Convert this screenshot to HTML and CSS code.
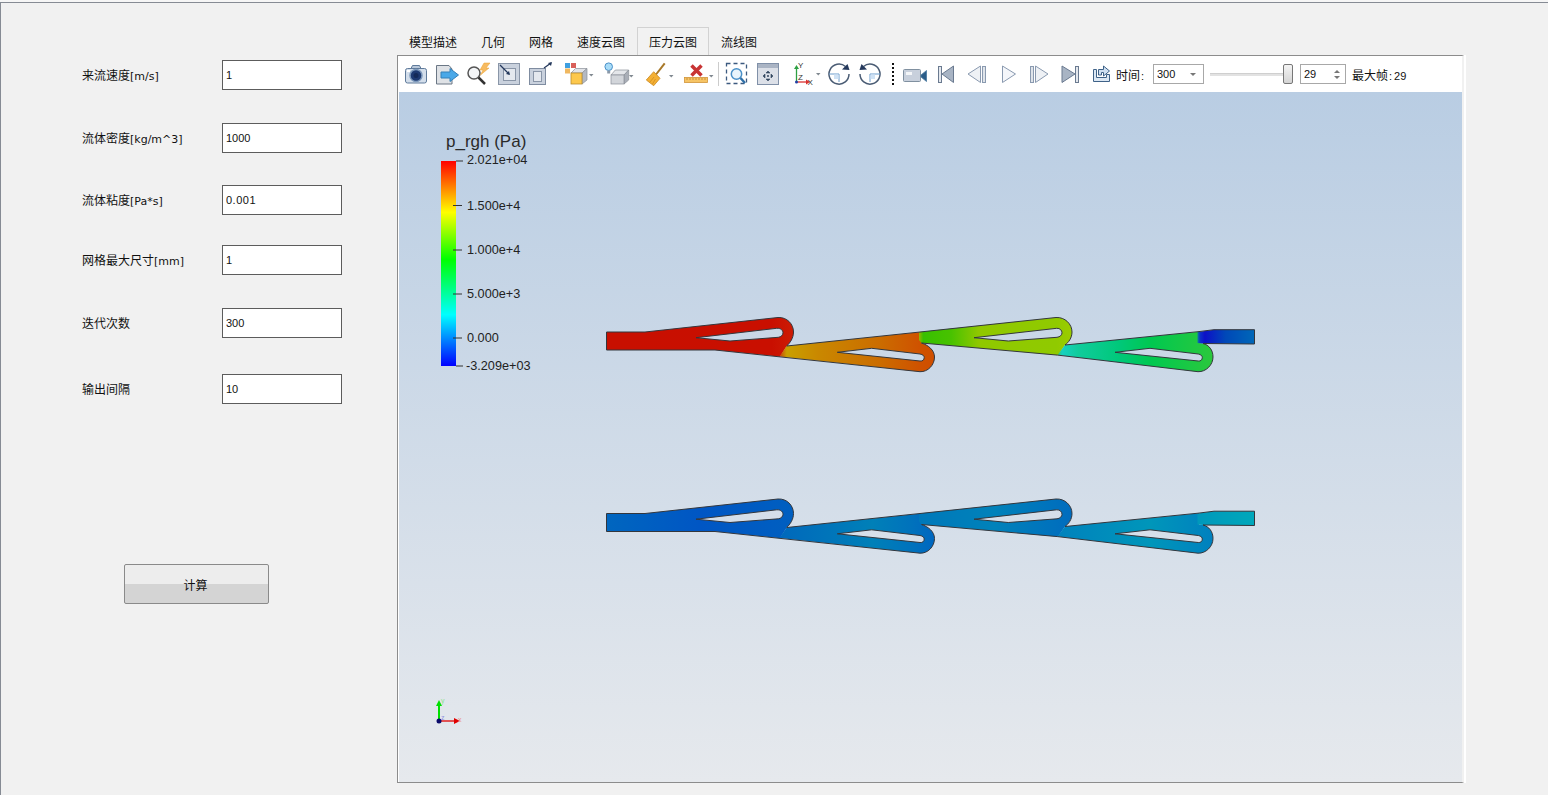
FILE: index.html
```html
<!DOCTYPE html>
<html lang="zh">
<head>
<meta charset="utf-8">
<title>压力云图</title>
<link rel="stylesheet" href="styles.css">
</head>
<body>
<div class="window">
  <aside class="form">
    <div class="row"><label>来流速度<span class="unit">[m/s]</span></label><input class="field" value="1"></div>
    <div class="row"><label>流体密度<span class="unit">[kg/m^3]</span></label><input class="field" value="1000"></div>
    <div class="row"><label>流体粘度<span class="unit">[Pa*s]</span></label><input class="field spaced" value="0.001"></div>
    <div class="row"><label>网格最大尺寸<span class="unit">[mm]</span></label><input class="field" value="1"></div>
    <div class="row"><label>迭代次数</label><input class="field" value="300"></div>
    <div class="row"><label>输出间隔</label><input class="field" value="10"></div>
    <button class="calc">计算</button>
  </aside>
  <main class="main">
    <nav class="tabs">
      <span class="tab">模型描述</span>
      <span class="tab">几何</span>
      <span class="tab">网格</span>
      <span class="tab">速度云图</span>
      <span class="tab active">压力云图</span>
      <span class="tab">流线图</span>
    </nav>
    <section class="pane">
      <div class="toolbar">
        <svg width="30" height="36" viewBox="401 56 30 36"><path d="M411 68.5l1.5-3h7l1.5 3z" fill="#b9c8da" stroke="#5f7a9a"/><rect x="405.5" y="68.5" width="21" height="14.5" rx="2" fill="#d3deeb" stroke="#5f7a9a"/><circle cx="416" cy="75.5" r="6" fill="#1e3a72" stroke="#7c98bb" stroke-width="1.5"/><circle cx="416" cy="75.5" r="2.5" fill="#142a58"/><rect x="407" y="70" width="3" height="2" fill="#fff"/></svg>
        <svg width="32" height="36" viewBox="431 56 32 36"><path d="M436.5 65.5H449l3 3.5v15h-15.500z" fill="#dfe2e6" stroke="#6b7785"/><path d="M441 72h9v-3.500l8.500 6.500-8.500 6.500V78h-9z" fill="#4aa8e8" stroke="#3580b8"/></svg>
        <svg width="29" height="36" viewBox="463 56 29 36"><circle cx="474" cy="73" r="6" fill="#f4f6f8" stroke="#555" stroke-width="1.500"/><path d="M478.500 77.500l6.500 6.500" stroke="#333" stroke-width="2.500"/><path d="M484 63h6l-4 5h3l-8.500 7 2.500-5h-3z" fill="#f7bb60" stroke="#e8a030" stroke-width=".5"/></svg>
        <svg width="34" height="36" viewBox="492 56 34 36"><rect x="498.500" y="63.500" width="21" height="21" fill="#c9d1dd" stroke="#8a96a8"/><rect x="503.500" y="68.500" width="12" height="12" fill="#e4e8ee" stroke="#8a96a8"/><path d="M500 65l9 9" stroke="#24385c" stroke-width="1.300"/><path d="M510 75l-4-1 3-3z" fill="#24385c"/></svg>
        <svg width="30" height="36" viewBox="526 56 30 36"><rect x="529.500" y="68.500" width="16" height="16" fill="#c9d1dd" stroke="#7f8ca0"/><rect x="533.500" y="71.500" width="8" height="10" fill="#e4e8ee" stroke="#8a96a8"/><path d="M544 68l7-5" stroke="#24385c" stroke-width="1.300"/><path d="M552 62l-1 4-3-3z" fill="#24385c"/></svg>
        <svg width="46" height="36" viewBox="556 56 46 36"><rect x="565" y="63" width="5" height="5" fill="#3f9fe0"/><rect x="571" y="63" width="5" height="5" fill="#d9605a"/><rect x="565" y="68.500" width="5" height="5" fill="#f0b860"/><path d="M571 73l4.500-4.500H587L582 73z" fill="#e2e4e8" stroke="#8a8f98" stroke-width=".7"/><path d="M582 73l5-4.500V80l-5 4z" fill="#b4b9c2" stroke="#8a8f98" stroke-width=".7"/><rect x="571" y="73" width="11" height="11" fill="#fdc84c" stroke="#b88c30" stroke-width=".8"/><path d="M589 74h4.500l-2.250 2.500z" fill="#808890"/></svg>
        <svg width="40" height="36" viewBox="602 56 40 36"><circle cx="608.700" cy="66.700" r="3.800" fill="#a8dcf8" stroke="#4a90c8"/><rect x="607.200" y="70.500" width="3" height="3" fill="#8a98a8"/><path d="M611 75l4.300-5h13.400L624 75z" fill="#e4e6ea" stroke="#8a8f98" stroke-width=".7"/><path d="M624 75l4.700-5v10l-4.700 4z" fill="#a9aeb7" stroke="#8a8f98" stroke-width=".7"/><rect x="611" y="75" width="13" height="9" fill="#d2d5da" stroke="#8a8f98" stroke-width=".7"/><path d="M629 75h4.500l-2.250 2.500z" fill="#808890"/></svg>
        <svg width="39" height="36" viewBox="642 56 39 36"><path d="M664.700 63.300L656 74.500" stroke="#a87828" stroke-width="2"/><path d="M653.700 71.700L660 78.300 653.700 85.700 646.300 80z" fill="#f4b034" stroke="#c98820" stroke-width=".8"/><path d="M650 82l4-5M652.500 84l3-5" stroke="#c98820" stroke-width=".7"/><path d="M669 75h4.500l-2.250 2.500z" fill="#808890"/></svg>
        <svg width="35" height="36" viewBox="681 56 35 36"><rect x="684.500" y="77.500" width="23" height="5" fill="#f6c465" stroke="#d29438" stroke-width=".8"/><path d="M687 78v2M690 78v2M693 78v2M696 78v2M699 78v2M702 78v2M705 78v2" stroke="#b87c28" stroke-width=".7"/><path d="M691.500 65.500l10 10M701.500 65.500l-10 10" stroke="#c83434" stroke-width="3.500"/><path d="M709 75h4.500l-2.250 2.500z" fill="#808890"/></svg>
        <span class="sep"></span>
        <svg width="31" height="36" viewBox="721 56 31 36"><rect x="726.500" y="63.500" width="20" height="20" fill="none" stroke="#3c5a80" stroke-width="1.300" stroke-dasharray="4 3"/><circle cx="736.500" cy="74" r="5.200" fill="#e8f4fc" stroke="#4a90c8" stroke-width="1.500"/><path d="M740.500 78l4.500 5" stroke="#3070a8" stroke-width="2.500"/></svg>
        <svg width="32" height="36" viewBox="752 56 32 36"><rect x="757.500" y="63.500" width="21" height="21" fill="#dce0e8" stroke="#8090a8"/><rect x="758" y="64" width="20" height="4" fill="#aab4c4"/><path d="M768 71l-2 2h4zM768 81l-2-2h4zM763 76l2-2v4zM773 76l-2-2v4z" fill="#33465f" stroke="#33465f" stroke-width=".6"/><circle cx="768" cy="76" r="1" fill="#33465f"/></svg>
        <svg class="axes" width="40" height="36" viewBox="784 56 40 36"><path d="M796.500 82V68" stroke="#2ea043" stroke-width="1.300"/><path d="M796.500 65l-2.500 4h5z" fill="#2ea043"/><path d="M796.500 82H807" stroke="#d83030" stroke-width="1.300"/><path d="M810 82l-4-2.500v5z" fill="#d83030"/><circle cx="796.500" cy="82" r="1.500" fill="#2040a8"/><text x="798" y="68">Y</text><text x="798" y="80">Z</text><text x="807.500" y="85">X</text><path d="M816 73h4.500l-2.250 2.500z" fill="#808890"/></svg>
        <svg width="30" height="36" viewBox="824 56 30 36"><path d="M845.500 66.500A10 10 0 1 0 849 74" fill="none" stroke="#4a5c74" stroke-width="1.500"/><path d="M849.500 70l-7.500-.5 5.500-5.500z" fill="#24385c"/><path d="M829 74h10v8" fill="none" stroke="#6a9ccc"/><rect x="834" y="74.500" width="4.500" height="4.500" fill="#cfe2f5"/></svg>
        <svg width="31" height="36" viewBox="854 56 31 36"><path d="M863.500 66.500A10 10 0 1 1 860 74" fill="none" stroke="#4a5c74" stroke-width="1.500"/><path d="M859.500 70l7.500-.5-5.500-5.500z" fill="#24385c"/><path d="M880 74h-10v8" fill="none" stroke="#6a9ccc"/><rect x="870.500" y="74.500" width="4.500" height="4.500" fill="#cfe2f5"/></svg>
        <svg width="16" height="36" viewBox="885 56 16 36"><path d="M893 63v22" stroke="#111" stroke-width="2" stroke-dasharray="2 2"/></svg>
        <svg width="29" height="36" viewBox="901 56 29 36"><rect x="903.500" y="69.500" width="17" height="12" rx="1" fill="#c8d0dc" stroke="#8090a0"/><rect x="906" y="72" width="6" height="3" fill="#f4f6f8"/><path d="M921 75l5.500-4.500v11L921 77z" fill="#2a5c88" stroke="#4a7aa0" stroke-width=".8"/></svg>
        <svg width="31" height="36" viewBox="930 56 31 36"><rect x="938.500" y="66.500" width="3" height="16" fill="#e4e8ee" stroke="#6a7a90"/><path d="M953.500 66v16.500L942 74z" fill="#a8b4c4" stroke="#6a7a90"/></svg>
        <svg width="31" height="36" viewBox="961 56 31 36"><path d="M980.500 66v16.500L968 74z" fill="#eef1f5" stroke="#8a9ab0"/><rect x="982.500" y="66.500" width="3" height="16" fill="#dfe4ea" stroke="#8a9ab0"/></svg>
        <svg width="32" height="36" viewBox="992 56 32 36"><path d="M1002.500 66v16.500L1015.500 74z" fill="#f4f6fa" stroke="#8a9ab0"/></svg>
        <svg width="31" height="36" viewBox="1024 56 31 36"><rect x="1030.500" y="66.500" width="3" height="16" fill="#dfe4ea" stroke="#8a9ab0"/><path d="M1035.500 66v16.500L1048 74z" fill="#eef1f5" stroke="#8a9ab0"/></svg>
        <svg width="31" height="36" viewBox="1055 56 31 36"><path d="M1062 66v16.500L1075 74z" fill="#a8b4c4" stroke="#6a7a90"/><rect x="1075.500" y="66.500" width="3" height="16" fill="#e4e8ee" stroke="#6a7a90"/></svg>
        <svg width="30" height="36" viewBox="1086 56 30 36"><path d="M1093.500 69.500h3v8h10v-3h3v7h-16z" fill="#dce8f4" stroke="#3f6288"/><path d="M1098.500 75v-5.500h5V66l6 5-6 5v-3.500h-2V75z" fill="#cfe0f2" stroke="#3f6288"/></svg>
        <span class="time">时间<span class="colon">:</span></span>
        <div class="combo"><span class="num">300</span><i class="caret"></i></div>
        <div class="slider"><span class="groove"></span><span class="handle"></span></div>
        <div class="spin"><span class="num">29</span><span class="arrows"><i class="up"></i><i class="down"></i></span></div>
        <span class="maxf">最大帧<span class="colon">:</span><span class="num">29</span></span>
      </div>
      <div class="view">
        <svg class="scene" width="1063" height="690" viewBox="399 92 1063 690">
          <defs>
            <linearGradient id="bar" x1="0" y1="0" x2="0" y2="1">
              <stop offset="0" stop-color="#ff0000"/><stop offset=".25" stop-color="#ffff00"/><stop offset=".48" stop-color="#00ff00"/><stop offset=".75" stop-color="#00ffff"/><stop offset="1" stop-color="#0000ff"/>
            </linearGradient>
            <linearGradient id="a1" gradientUnits="userSpaceOnUse" x1="606" y1="0" x2="790" y2="0"><stop offset="0" stop-color="#c80f00"/><stop offset=".9" stop-color="#c90f00"/><stop offset="1" stop-color="#cc1a04"/></linearGradient>
            <linearGradient id="a2" gradientUnits="userSpaceOnUse" x1="779" y1="0" x2="935" y2="0"><stop offset="0" stop-color="#c83c08"/><stop offset=".05" stop-color="#c9a000"/><stop offset=".25" stop-color="#c98800"/><stop offset=".65" stop-color="#cb6c00"/><stop offset=".9" stop-color="#cf5200"/><stop offset="1" stop-color="#cf4e00"/></linearGradient>
            <linearGradient id="a3" gradientUnits="userSpaceOnUse" x1="917" y1="0" x2="1072" y2="0"><stop offset="0" stop-color="#c8b000"/><stop offset=".04" stop-color="#38c000"/><stop offset=".22" stop-color="#48c200"/><stop offset=".4" stop-color="#90c800"/><stop offset=".9" stop-color="#90ca00"/><stop offset="1" stop-color="#9ccc00"/></linearGradient>
            <linearGradient id="a4" gradientUnits="userSpaceOnUse" x1="1056" y1="0" x2="1214" y2="0"><stop offset="0" stop-color="#40c840"/><stop offset=".04" stop-color="#18d0c0"/><stop offset=".14" stop-color="#10cc9c"/><stop offset=".4" stop-color="#00c87a"/><stop offset=".6" stop-color="#00c850"/><stop offset="1" stop-color="#2cc83c"/></linearGradient>
            <linearGradient id="a5" gradientUnits="userSpaceOnUse" x1="1196" y1="0" x2="1255" y2="0"><stop offset="0" stop-color="#10a888"/><stop offset=".07" stop-color="#0c30c8"/><stop offset=".15" stop-color="#0c10c8"/><stop offset=".5" stop-color="#0048b8"/><stop offset="1" stop-color="#0068b8"/></linearGradient>
            <linearGradient id="b1" gradientUnits="userSpaceOnUse" x1="606" y1="0" x2="794" y2="0"><stop offset="0" stop-color="#0066bf"/><stop offset=".5" stop-color="#0056c4"/><stop offset="1" stop-color="#005fc0"/></linearGradient>
            <linearGradient id="b2" gradientUnits="userSpaceOnUse" x1="779" y1="0" x2="935" y2="0"><stop offset="0" stop-color="#0068bc"/><stop offset=".6" stop-color="#0080b8"/><stop offset=".85" stop-color="#0072bc"/><stop offset="1" stop-color="#0066c0"/></linearGradient>
            <linearGradient id="b3" gradientUnits="userSpaceOnUse" x1="917" y1="0" x2="1072" y2="0"><stop offset="0" stop-color="#0078ba"/><stop offset=".5" stop-color="#0082ba"/><stop offset="1" stop-color="#006cbe"/></linearGradient>
            <linearGradient id="b4" gradientUnits="userSpaceOnUse" x1="1056" y1="0" x2="1214" y2="0"><stop offset="0" stop-color="#0082bd"/><stop offset=".6" stop-color="#0096ba"/><stop offset="1" stop-color="#0080bf"/></linearGradient>
            <linearGradient id="b5" gradientUnits="userSpaceOnUse" x1="1197" y1="0" x2="1255" y2="0"><stop offset="0" stop-color="#0098bb"/><stop offset="1" stop-color="#00a8bb"/></linearGradient>
            <path id="u1" fill-rule="evenodd" d="M606.500 332L645 332 778 317.500C787 317 793.500 324 793.500 332 793.500 338 790 343 786.700 346L780 356.700 715 350 606.500 350Z M696 337.700L776.700 328.300C781 328 783 330.500 783 332.800 783 335 781 337 778.300 337.300L730 341Z"/>
            <path id="u2" fill-rule="evenodd" d="M786.700 346L921 332 921.500 343C928 345 934.500 350 934.500 357 934.500 365 928 372 920 371.700L779.500 356.600Z M837.300 352.300L871.700 348.300 920 354C923 354.500 924.200 356 924.200 357.500 924.200 360 922.500 361.300 920 361Z"/>
            <path id="u3" fill-rule="evenodd" d="M919 332L1056 317.500C1065 317 1072 324 1072 332 1072 338 1068.500 342.500 1065 345L1058 355.200 921.500 343 919 340Z M974 337.700L1056.700 328.300C1060 328 1062 330.500 1062 332.800 1062 335 1060 337 1057 337.300L1008.300 341Z"/>
            <path id="u4" fill-rule="evenodd" d="M1065 345L1199 331.700 1199 343 1203 343.500C1209 345 1213 350 1213 357 1213 365 1206 372 1198 371.700L1057.500 355.100Z M1115 352.300L1150 348.300 1198.300 354C1201 354.500 1202.300 356 1202.300 357.500 1202.300 360 1200.500 361.300 1198.300 361Z"/>
            <path id="u5" d="M1197.500 331.900L1214 329.700 1254.500 329.700 1254.500 344 1203 343.500 1197.500 343Z"/>
            <path id="edge" fill="none" stroke="#33363c" stroke-width="1" d="M606.500 332L645 332 778 317.500C787 317 793.500 324 793.500 332 793.500 338 790 343 786.700 346L920 332 1056 317.500C1065 317 1072 324 1072 332 1072 338 1068.500 342.500 1065 345L1198 331.700 1214 329.700 1254.500 329.700 1254.500 344 1203 343.500C1209 345 1213 350 1213 357 1213 365 1206 372 1198 371.700L1057.500 355.100 921.500 343C928 345 934.500 350 934.500 357 934.500 365 928 372 920 371.700L715 350 606.500 350Z M696 337.700L776.700 328.300C781 328 783 330.500 783 332.800 783 335 781 337 778.300 337.300L730 341Z M837.300 352.300L871.700 348.300 920 354C923 354.500 924.200 356 924.200 357.500 924.200 360 922.500 361.300 920 361Z M974 337.700L1056.700 328.300C1060 328 1062 330.500 1062 332.800 1062 335 1060 337 1057 337.300L1008.300 341Z M1115 352.300L1150 348.300 1198.300 354C1201 354.500 1202.300 356 1202.300 357.500 1202.300 360 1200.500 361.300 1198.300 361Z"/>
          </defs>

          <text class="legend-title" x="446" y="147">p_rgh (Pa)</text>
          <rect x="441" y="161" width="15" height="205" fill="url(#bar)"/>
          <path class="ticks" d="M456 161h7M453 205.500h9M453 250h9M453 294h9M453 338h9M456 366h7"/>
          <text class="legend" x="467" y="164">2.021e+04</text>
          <text class="legend" x="467" y="210">1.500e+4</text>
          <text class="legend" x="467" y="254">1.000e+4</text>
          <text class="legend" x="467" y="298">5.000e+3</text>
          <text class="legend" x="467" y="342">0.000</text>
          <text class="legend" x="466" y="370">-3.209e+03</text>

          <use href="#u1" fill="url(#a1)"/><use href="#u2" fill="url(#a2)"/><use href="#u3" fill="url(#a3)"/><use href="#u4" fill="url(#a4)"/><use href="#u5" fill="url(#a5)"/>
          <use href="#edge"/>
          <g transform="translate(0 181.500)">
            <use href="#u1" fill="url(#b1)"/><use href="#u2" fill="url(#b2)"/><use href="#u3" fill="url(#b3)"/><use href="#u4" fill="url(#b4)"/><use href="#u5" fill="url(#b5)"/>
            <use href="#edge"/>
          </g>

          <path d="M439 721V705" stroke="#00e000" stroke-width="2"/><path d="M439 700l-3 6h6z" fill="#00e000"/>
          <path d="M439 721H455" stroke="#e02020" stroke-width="1.500"/><path d="M460 721l-6-3v6z" fill="#e00000"/>
          <circle cx="439" cy="721" r="2.500" fill="#0a0a6a"/>
          <text class="tiny ty" x="441" y="703">y</text><text class="tiny tx" x="458" y="722">x</text><text class="tiny tz" x="441" y="720">z</text>
        </svg>
      </div>
    </section>
  </main>
</div>
</body>
</html>
```
FILE: styles.css
```css
* { box-sizing: border-box; }
html, body { margin: 0; height: 795px; overflow: hidden; }
body {
  background: #f6f6f6;
  font: 12px "Noto Sans CJK SC", sans-serif;
  color: #111;
}
.window {
  margin-top: 2px;
  height: 793px;
  display: flex;
  background: #f1f1f1;
  border-top: 1px solid #868b94;
  border-left: 1px solid #868b94;
}
.form { width: 396px; flex: none; padding: 57px 0 0 81px; }
.row { display: flex; align-items: center; height: 30px; }
.row label { width: 140px; flex: none; margin-bottom: 2px; }
.unit { font: 11px "DejaVu Sans", sans-serif; }
.row:nth-child(2) { margin-top: 33px; }
.row:nth-child(3) { margin-top: 32px; }
.row:nth-child(4) { margin-top: 30px; }
.row:nth-child(5) { margin-top: 33px; }
.row:nth-child(6) { margin-top: 36px; }
.field {
  width: 120px;
  height: 30px;
  padding: 0 3px;
  border: 1px solid #5c5c5c;
  border-radius: 0;
  outline: none;
  background: #fff;
  color: #111;
  font: 11px "Liberation Sans", sans-serif;
}
.field.spaced { letter-spacing: .5px; }
.calc {
  display: block;
  width: 145px;
  height: 40px;
  margin: 160px 0 0 42px;
  padding: 0 2px 0 0;
  border: 1px solid #8a8a8a;
  border-radius: 2px;
  background: linear-gradient(#ededed 0 50%, #d4d4d4 50% 100%);
  color: #111;
  font: 12px "Noto Sans CJK SC", sans-serif;
}
.main { flex: 1; padding-top: 24px; min-width: 0; }
.tabs { display: flex; height: 28px; }
.tab {
  height: 28px;
  padding: 6px 11px 0;
  line-height: 16px;
  border: 1px solid transparent;
  border-bottom: 0;
  white-space: nowrap;
}
.tab.active { background: #f2f2f2; border-color: #d2d2d2; }
.pane {
  width: 1067px;
  height: 728px;
  padding: 0 0 0 1px;
  background: #fff;
  border-style: solid;
  border-color: #8c8c8c #f1f1f1 #8c8c8c #8c8c8c;
  border-width: 1px 2px 1px 1px;
  box-shadow: 2px 0 0 #fff;
}
.toolbar {
  display: flex;
  align-items: center;
  height: 36px;
  padding-left: 2px;
  background: #fff;
}
.toolbar svg { flex: none; display: block; }
.axes text { font: 8px "Liberation Sans", sans-serif; fill: #333; }
.sep { width: 5px; height: 24px; flex: none; border-left: 2px solid #fff; border-right: 2px solid #fff; background: #ccc; }
.time { width: 37px; flex: none; }
.colon { margin: 0 2px 0 1px; font: 11px "Liberation Sans", sans-serif; }
.num { font: 11px "Liberation Sans", sans-serif; }
.combo, .spin {
  height: 20px;
  display: flex;
  align-items: center;
  justify-content: space-between;
  padding: 0 3px;
  border: 1px solid #a8a8a8;
  flex: none;
}
.combo { width: 51px; }
.caret { width: 0; height: 0; margin-right: 4px; border: 3px solid transparent; border-top: 3px solid #777; border-bottom: 0; }
.slider { width: 83px; height: 20px; margin-left: 6px; flex: none; display: flex; align-items: center; position: relative; }
.groove { width: 100%; height: 3px; background: #e2e2e2; border: 1px solid #cfcfcf; border-width: 1px 0 0; }
.handle {
  position: absolute; right: 0; top: 0;
  width: 10px; height: 20px;
  border: 1px solid #777; border-radius: 2px;
  background: linear-gradient(#f4f4f4, #d4d4d4);
}
.spin { width: 46px; margin-left: 7px; }
.arrows { display: flex; flex-direction: column; gap: 3px; margin-right: 2px; }
.arrows i { display: block; width: 0; height: 0; border: 3px solid transparent; }
.arrows .up { border-top: 0; border-bottom: 3px solid #777; }
.arrows .down { border-bottom: 0; border-top: 3px solid #777; }
.maxf { margin-left: 6px; white-space: nowrap; }
.view { width: 1063px; height: 690px; background: linear-gradient(#b9cde3, #e6e9ed); }
.scene { display: block; }
.legend-title { font: 17px "Liberation Sans", sans-serif; fill: #2a2a2a; }
.legend { font: 12.7px "Liberation Sans", sans-serif; fill: #222; }
.ticks { fill: none; stroke: #333; stroke-width: 1; }
.tiny { font: 7px "Liberation Sans", sans-serif; }
.ty { fill: #8fe08f; }
.tx { fill: #e89090; }
.tz { fill: #8f8fe0; }
```
